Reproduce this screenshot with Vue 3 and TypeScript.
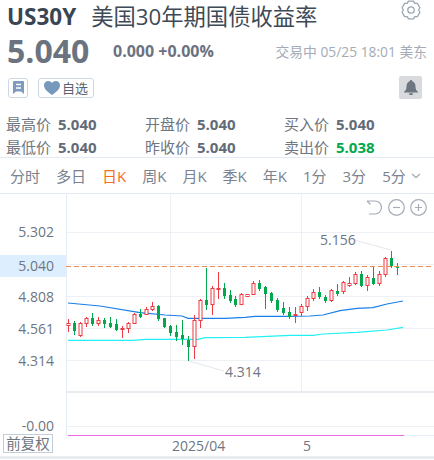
<template>
  <div class="page">
    <header class="head">
      <div class="title-row">
        <b class="symbol">US30Y</b>
        <span class="name">美国30年期国债收益率</span>
        <svg class="gear" width="20" height="20" viewBox="0 0 20 20" fill="none" stroke="#9ba6b2" stroke-width="1.300" stroke-linejoin="round">
          <polygon :points="gearPoints" />
          <circle cx="10" cy="10" r="3.200" />
        </svg>
      </div>
      <div class="price-row">
        <b class="price">5.040</b>
        <b class="change">0.000 +0.00%</b>
        <span class="time">交易中 05/25 18:01 美东</span>
      </div>
      <div class="action-row">
        <span class="btn square">
          <svg width="11" height="13" viewBox="0 0 11 13">
            <path d="M0 1a1 1 0 0 1 1-1h9a1 1 0 0 1 1 1v12l-3-2.500H3L0 13z" fill="#7c9bbd" />
            <path d="M3 3.500h5M3 7h5" stroke="#fff" stroke-width="1.400" />
          </svg>
        </span>
        <span class="btn fav">
          <svg width="16" height="14" viewBox="0 0 16 14">
            <path d="M8 14C3 10.500 0 8 0 4.300 0 1.800 1.900 0 4.200 0 5.800 0 7.200.8 8 2.100 8.800.8 10.200 0 11.800 0 14.100 0 16 1.800 16 4.300 16 8 13 10.500 8 14z" fill="#7698bd" />
          </svg>
          自选
        </span>
        <span class="bell">
          <svg width="14" height="15" viewBox="0 0 14 15">
            <path d="M7 0a1.200 1.200 0 0 1 1.200 1.300C10.500 1.900 11.500 4 11.500 6.500c0 2.800.8 3.800 2.500 5.300v.7H0v-.7c1.700-1.500 2.500-2.500 2.500-5.300C2.500 4 3.500 1.900 5.800 1.300A1.200 1.200 0 0 1 7 0zM5 13.200h4a2 2 0 0 1-4 0z" fill="#6d7580" />
          </svg>
        </span>
      </div>
    </header>

    <section class="stats">
      <div v-for="s in stats" :key="s.label" class="stat">
        <span class="stat-label">{{ s.label }}</span>
        <b class="stat-value" :class="{ down: s.down }">{{ s.value }}</b>
      </div>
    </section>

    <nav class="tabs">
      <span v-for="t in tabs" :key="t" class="tab" :class="{ active: t === '日K' }">{{ t }}</span>
      <svg class="chevron" width="10" height="6" viewBox="0 0 10 6" fill="none" stroke="#a9b2bd" stroke-width="1.500">
        <path d="M1 1l4 3.500L9 1" />
      </svg>
    </nav>

    <div class="chart-wrap">
      <svg class="chart" width="434" height="262" viewBox="0 195 434 262">
        <rect x="0" y="256" width="66" height="22" fill="#ddeeff" />
        <g stroke="#edf0f4" stroke-width="1">
          <line v-for="y in gridY" :key="y" x1="67" x2="434" :y1="y + 0.5" :y2="y + 0.5" />
          <line x1="170.500" x2="170.500" y1="195" y2="392" />
          <line x1="301.500" x2="301.500" y1="195" y2="392" />
          <line x1="67" x2="434" y1="427.500" y2="427.500" />
        </g>
        <line x1="66.500" x2="66.500" y1="195" y2="436" stroke="#e6edf6" />
        <rect x="66" y="392" width="368" height="2" fill="#e8ecf1" />
        <line x1="66" x2="434" y1="436.500" y2="436.500" stroke="#e6edf6" />

        <polyline :points="maBlue" fill="none" stroke="#1a7fe8" stroke-width="1.200" />
        <polyline :points="maCyan" fill="none" stroke="#22f0f2" stroke-width="1.200" />

        <g v-for="(c, i) in candles" :key="i">
          <line :x1="c.x + 0.5" :x2="c.x + 0.5" :y1="c.wt" :y2="c.wb" :stroke="c.up ? '#ee3a43' : '#02a84d'" />
          <rect v-if="c.up" :x="c.x - 1" :y="c.t + 0.500" width="3" :height="Math.max(c.b - c.t - 1, 1)" fill="#fff" stroke="#ee3a43" />
          <rect v-else :x="c.x - 1" :y="c.t" width="3" :height="c.b - c.t" fill="#02a84d" />
        </g>

        <line x1="66" x2="434" y1="267.500" y2="267.500" stroke="#ee8c4e" stroke-width="1" stroke-dasharray="5 3" />
        <line x1="354" y1="241" x2="391" y2="251" stroke="#e4e7ee" />
        <line x1="189" y1="362" x2="224" y2="372" stroke="#e4e7ee" />
        <line x1="68" x2="404" y1="436.500" y2="436.500" stroke="#ee66e8" />

        <g class="axis">
          <text v-for="l in yLabels" :key="l.text" x="54" :y="l.y" text-anchor="end">{{ l.text }}</text>
          <text x="320" y="246">5.156</text>
          <text x="225" y="378">4.314</text>
          <text x="172" y="452">2025/04</text>
          <text x="303" y="452">5</text>
        </g>
      </svg>

      <div class="chart-tools">
        <svg width="17" height="17" viewBox="0 0 17 17" fill="none" stroke="#a4acb6" stroke-width="1.200">
          <path d="M1 2h8a6.500 6.500 0 0 1 0 13H3M1 2l3.500 3.500" />
        </svg>
        <svg width="17" height="17" viewBox="0 0 17 17" fill="none" stroke="#a4acb6" stroke-width="1.200">
          <circle cx="8.500" cy="8.500" r="7.800" />
          <path d="M5 8.500h7" />
        </svg>
        <svg width="17" height="17" viewBox="0 0 17 17" fill="none" stroke="#a4acb6" stroke-width="1.200">
          <circle cx="8.500" cy="8.500" r="7.800" />
          <path d="M5 8.500h7M8.500 5v7" />
        </svg>
      </div>
      <span class="adjust">前复权</span>
    </div>
    <div class="foot"></div>
  </div>
</template>

<script setup lang="ts">
interface Candle {
  x: number
  t: number
  b: number
  wt: number
  wb: number
  up: boolean
}

const stats = [
  { label: '最高价', value: '5.040' },
  { label: '开盘价', value: '5.040' },
  { label: '买入价', value: '5.040' },
  { label: '最低价', value: '5.040' },
  { label: '昨收价', value: '5.040' },
  { label: '卖出价', value: '5.038', down: true },
]

const tabs = ['分时', '多日', '日K', '周K', '月K', '季K', '年K', '1分', '3分', '5分']

const gridY = [233, 265, 297, 329, 361]

const yLabels = [
  { text: '5.302', y: 238 },
  { text: '5.040', y: 272 },
  { text: '4.808', y: 303 },
  { text: '4.561', y: 335 },
  { text: '4.314', y: 367 },
  { text: '-0.00', y: 432 },
]

const maBlue = '68,304 100,307 140,313.700 165,316 182,317 188,319.300 225,319.300 245,318.300 255,317.300 288,317.300 310,317 323,316 340,311.700 357,309.300 373,308.700 387,305 403,302'
const maCyan = '68,341.300 133,341.300 145,340.300 198,340.300 205,338.700 245,338.300 290,336.300 313,336.300 323,335 357,333.300 387,331 403,328.300'

// six lobes round the centre of the 20px gear
const gearPoints = [0, 1, 2, 3, 4, 5]
  .flatMap((k) => {
    const a = -90 + k * 60
    return [[a - 16, 9.2], [a + 16, 9.2], [a + 30, 7.6]]
  })
  .map(([deg, r]) => {
    const rad = (deg * Math.PI) / 180
    return `${(10 + r * Math.cos(rad)).toFixed(2)},${(10 + r * Math.sin(rad)).toFixed(2)}`
  })
  .join(' ')

// top, bottom, wick top, wick bottom, red?
const raw: [number, number, number, number, boolean][] = [
  [324, 327, 320, 333, true], [324, 332, 322, 336, false], [324, 337, 323, 338, true],
  [319, 325, 318, 328, true], [319, 325, 314, 327, false], [321, 325, 318, 327, true],
  [321, 325, 319, 329, false], [324, 328, 318, 329, false], [325, 331, 320, 332, false],
  [329, 331, 327, 339, true], [324, 330, 323, 334, true], [315, 325, 314, 325, true],
  [315, 318, 310, 319, false], [310, 316, 308, 316, true], [307, 311, 303, 312, true],
  [307, 320, 306, 322, false], [319, 328, 319, 329, false], [327, 334, 326, 337, false],
  [333, 338, 326, 342, false], [336, 340, 321, 346, false], [341, 348, 337, 362, false],
  [321, 348, 316, 360, true], [301, 322, 300, 329, true], [301, 306, 269, 311, false],
  [289, 306, 287, 316, true], [289, 290, 273, 300, true], [289, 297, 284, 300, false],
  [296, 302, 291, 304, false], [300, 306, 297, 308, false], [295, 306, 294, 306, true],
  [295, 298, 295, 298, true], [284, 296, 282, 296, true], [284, 290, 281, 292, false],
  [288, 295, 287, 310, false], [294, 302, 293, 304, false], [301, 311, 299, 313, false],
  [309, 314, 303, 316, false], [313, 318, 308, 320, false], [315, 317, 308, 324, true],
  [307, 314, 305, 317, true], [299, 308, 297, 312, true], [293, 300, 290, 302, true],
  [293, 298, 288, 300, false], [298, 302, 296, 304, false], [291, 302, 290, 303, true],
  [292, 295, 285, 297, false], [283, 293, 282, 295, true], [284, 287, 278, 288, true],
  [275, 285, 273, 286, true], [275, 287, 272, 288, false], [278, 287, 276, 292, true],
  [279, 285, 267, 286, false], [275, 285, 272, 287, true], [259, 276, 258, 278, true],
  [259, 267, 252, 269, false], [267, 269, 264, 276, false],
]

const candles: Candle[] = raw.map(([t, b, wt, wb, up], i) => ({
  x: 68 + i * 6 - (i > 27 ? 1 : 0),
  t,
  b,
  wt,
  wb,
  up,
}))
</script>

<style>
html,
body {
  background: #fff;
}
</style>

<style scoped>
.page {
  width: 434px;
  height: 460px;
  overflow: hidden;
  font-family: "Open Sans", "Noto Sans CJK SC", sans-serif;
  color: #6b7280;
}

.head {
  height: 110px;
  padding: 0 7px;
  box-sizing: border-box;
}

.title-row {
  display: flex;
  align-items: center;
  height: 34px;
}

.symbol {
  font-size: 22.500px;
  line-height: 30px;
  color: #3a4553;
  margin-right: 15px;
}

.name {
  font-size: 22.300px;
  line-height: 30px;
  color: #3f4a58;
  white-space: nowrap;
}

.gear {
  margin-left: auto;
  margin-right: 6px;
  margin-top: -14px;
}

.price-row {
  display: flex;
  align-items: center;
  height: 34px;
}

.price {
  font-size: 32px;
  line-height: 34px;
  color: #6b7280;
  width: 106px;
}

.change {
  font-size: 16px;
  color: #6b7280;
}

.time {
  margin-left: auto;
  font-size: 13.800px;
  color: #a3abb6;
  white-space: nowrap;
}

.action-row {
  display: flex;
  align-items: center;
  gap: 10px;
  margin-top: 8px;
  padding-left: 1px;
}

.btn {
  display: flex;
  align-items: center;
  justify-content: center;
  height: 20px;
  box-sizing: border-box;
  border: 1.500px solid #cdd8e6;
  border-radius: 3px;
  background: #fff;
}

.square {
  width: 20px;
}

.fav {
  width: 56px;
  gap: 2px;
  font-size: 13px;
  color: #5a6470;
}

.bell {
  display: flex;
  align-items: center;
  justify-content: center;
  width: 23px;
  height: 23px;
  margin-left: auto;
  margin-right: 5px;
  border-radius: 2px;
  background: #d8dade;
}

.stats {
  display: grid;
  grid-template-columns: repeat(3, 139px);
  grid-auto-rows: 23px;
  height: 48px;
  padding-left: 6px;
  box-sizing: border-box;
  border-bottom: 1px solid #e3eaf5;
  align-content: start;
  padding-top: 2px;
}

.stat {
  display: flex;
  align-items: center;
  gap: 7px;
}

.stat-label {
  font-size: 15px;
  color: #6e7681;
}

.stat-value {
  font-size: 15px;
  color: #626b78;
}

.stat-value.down {
  color: #02a84d;
}

.tabs {
  display: flex;
  align-items: center;
  gap: 16px;
  height: 36px;
  padding-left: 10px;
  box-sizing: border-box;
  border-bottom: 1px solid #e3eaf5;
  white-space: nowrap;
}

.tab {
  font-size: 15px;
  color: #7a828d;
}

.tab.active {
  color: #f36d1c;
}

.chevron {
  margin-left: -11px;
}

.chart-wrap {
  position: relative;
  height: 262px;
}

.chart {
  display: block;
}

.axis {
  font-size: 14px;
  fill: #6e7681;
}

.chart-tools {
  position: absolute;
  top: 5px;
  right: 7px;
  display: flex;
  align-items: center;
  gap: 5px;
}

.adjust {
  position: absolute;
  left: 3px;
  top: 240px;
  width: 50px;
  height: 19px;
  box-sizing: border-box;
  border: 1px solid #c5ccd6;
  background: #fff;
  font-size: 14.500px;
  line-height: 17px;
  text-align: center;
  color: #6e7681;
  white-space: nowrap;
}

.foot {
  height: 3px;
  background: #e8ecf1;
}
</style>
